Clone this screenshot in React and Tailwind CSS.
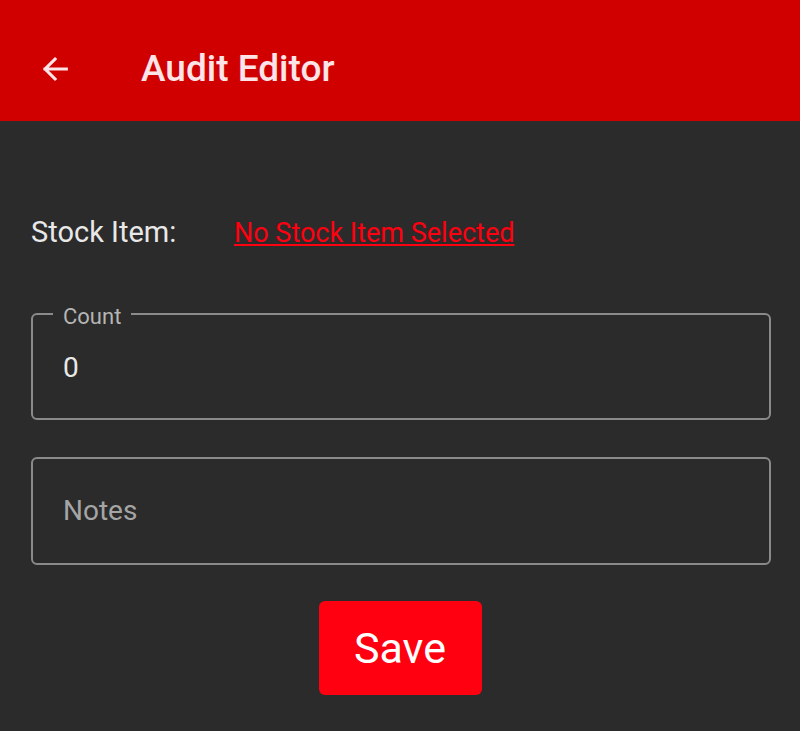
import React from "react";

export default function App() {
  return (
    <div className="w-[800px] h-[731px] bg-[#2b2b2b] overflow-hidden" style={{ fontFamily: "Roboto, sans-serif" }}>
      <div className="h-[121px] bg-[#d00000] flex items-center pl-[38px] pt-[16px]">
        <svg width="34" height="34" viewBox="0 0 24 24" fill="none" stroke="#fde4e8" strokeWidth="2.2" strokeLinecap="square">
          <path d="M20 12H5M12 5l-7 7 7 7" />
        </svg>
        <span className="ml-[69px] text-[37px] font-medium text-[#fde4e8]">Audit Editor</span>
      </div>
      <div className="pl-[31px] pr-[29px] pt-[94px]">
        <div className="flex items-center h-[36px]">
          <span className="text-[29px] text-[#e8e8e8] w-[203px]">Stock Item:</span>
          <span className="text-[27px] text-[#ff0010] underline">No Stock Item Selected</span>
        </div>
        <div className="relative mt-[62px] h-[107px] border-2 border-[#8a8a8a] rounded-[6px] flex items-center px-[30px]">
          <span className="absolute -top-[15px] left-[20px] px-[10px] bg-[#2b2b2b] text-[22px] text-[#b5b5b5]">Count</span>
          <span className="text-[28px] text-[#e8e8e8] mt-[2px]">0</span>
        </div>
        <div className="mt-[37px] h-[108px] border-2 border-[#8a8a8a] rounded-[6px] flex items-center px-[30px]">
          <span className="text-[28px] text-[#a5a5a5]">Notes</span>
        </div>
        <div className="flex justify-center mt-[36px] pr-[2px]">
          <div className="w-[163px] h-[94px] bg-[#ff0010] rounded-[6px] flex items-center justify-center text-[43px] text-white">Save</div>
        </div>
      </div>
    </div>
  );
}
